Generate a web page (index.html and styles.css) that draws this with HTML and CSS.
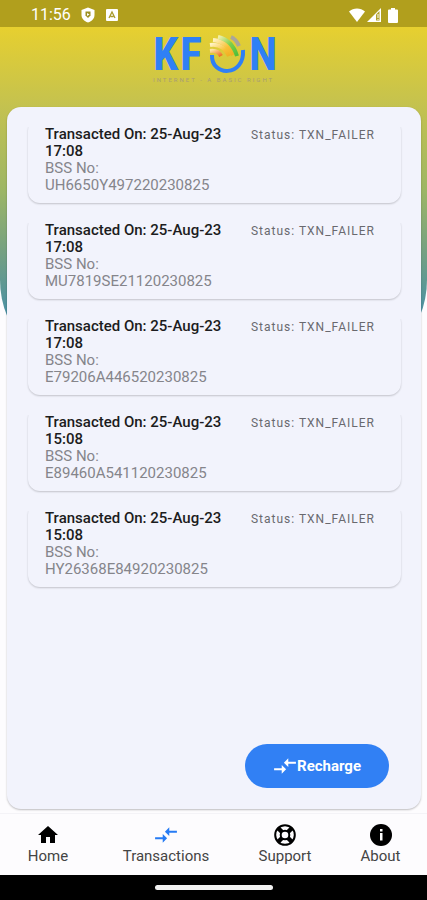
FILE: index.html
```html
<!DOCTYPE html>
<html lang="en">
<head>
<meta charset="utf-8">
<meta name="viewport" content="width=device-width, initial-scale=1">
<title>KFON Transactions</title>
<link rel="stylesheet" href="styles.css">
</head>
<body>
<svg class="defs" aria-hidden="true">
  <symbol id="swap" viewBox="1 1 22 22"><path fill="currentColor" d="M9 14H2v2h7v3l4-4-4-4zM15 13v-3h7V8h-7V5l-4 4z"/></symbol>
</svg>
<div class="screen">
  <div class="backdrop"></div>
  <div class="statusbar">
    <span class="clock">11:56</span>
    <svg width="14" height="16" viewBox="0 0 14 16"><path fill="#fff" d="M7 0.500 13.500 3v5c0 3.500-2.500 6-6.500 7.500C3 14 .5 11.500.5 8V3z"/><path fill="#9d9023" d="M4.500 4.500h5v4L7 11 4.500 8.500z"/><path fill="#fff" d="m6 6 2.500 1.500L6 9z"/></svg>
    <svg class="app" width="12" height="12" viewBox="0 0 12 12"><rect width="12" height="12" rx="1" fill="#fff"/><path d="M3 9 6 3l3 6M4.500 7.500h3" fill="none" stroke="#a99b2d" stroke-width="1.300"/></svg>
    <span class="signals">
      <svg width="16" height="14" viewBox="0 0 16 14"><path fill="#fff" d="M0 3.500C4.500-.5 11.500-.5 16 3.500L8 14z"/></svg>
      <svg width="14" height="14" viewBox="0 0 14 14"><path fill="#fff" d="M14 0v14H0z"/><path fill="#b1a02b" d="M9 6.500 12.500 3v9.500H9z"/><path fill="#fff" d="M10.500 6h1v4h-1zm0 5h1v1h-1z"/></svg>
      <svg class="battery" width="10" height="15" viewBox="0 0 10 15"><path fill="#fff" d="M3 0h4v1.500h2a1 1 0 0 1 1 1V14a1 1 0 0 1-1 1H1a1 1 0 0 1-1-1V2.500a1 1 0 0 1 1-1h2z"/></svg>
    </span>
  </div>
  <header class="brand">
    <svg width="126" height="54" viewBox="0 0 126 54" role="img" aria-label="KFON, Internet - a basic right">
      <defs>
        <linearGradient id="leafA" x1="0" y1="0" x2="1" y2="1"><stop offset="0" stop-color="#f5f0b0"/><stop offset=".5" stop-color="#7ed04b"/><stop offset="1" stop-color="#4dbd39"/></linearGradient>
        <linearGradient id="leafB" x1="0" y1="0" x2="1" y2="1"><stop offset="0" stop-color="#fff3c4"/><stop offset=".6" stop-color="#f8c136"/><stop offset="1" stop-color="#f1ad22"/></linearGradient>
        <linearGradient id="leafC" x1="0" y1="0" x2="1" y2="1"><stop offset="0" stop-color="#fce2a0"/><stop offset="1" stop-color="#f06a20"/></linearGradient>
      </defs>
      <text class="letters" x="2" y="39">K</text>
      <text class="letters" x="29" y="39">F</text>
      <text class="letters" x="98" y="39">N</text>
      <path d="M61 24C60 46 94 46 92 19" fill="none" stroke="#2f80f5" stroke-width="4"/>
      <g fill="none">
        <path d="M59 20q8-1 11 5" stroke="url(#leafC)" stroke-width="4"/>
        <path d="M59 14q13-2 19 11" stroke="url(#leafB)" stroke-width="4"/>
        <path d="M62 9q13 1 20 15" stroke="url(#leafB)" stroke-width="4"/>
        <path d="M67 6q14 3 19 19" stroke="url(#leafA)" stroke-width="4"/>
        <path d="M80 6q5 2 8 9" stroke="#aaa69a" stroke-width="4"/>
      </g>
      <text class="tagline" x="2" y="51">INTERNET - A BASIC RIGHT</text>
    </svg>
  </header>
  <main class="panel">
    <ul class="list">
      <li class="card"><div class="detail"><h2>Transacted On: 25-Aug-23 17:08</h2><p>BSS No: UH6650Y497220230825</p></div><span class="status">Status: TXN_FAILER</span></li>
      <li class="card"><div class="detail"><h2>Transacted On: 25-Aug-23 17:08</h2><p>BSS No: MU7819SE21120230825</p></div><span class="status">Status: TXN_FAILER</span></li>
      <li class="card"><div class="detail"><h2>Transacted On: 25-Aug-23 17:08</h2><p>BSS No: E79206A446520230825</p></div><span class="status">Status: TXN_FAILER</span></li>
      <li class="card"><div class="detail"><h2>Transacted On: 25-Aug-23 15:08</h2><p>BSS No: E89460A541120230825</p></div><span class="status">Status: TXN_FAILER</span></li>
      <li class="card"><div class="detail"><h2>Transacted On: 25-Aug-23 15:08</h2><p>BSS No: HY26368E84920230825</p></div><span class="status">Status: TXN_FAILER</span></li>
    </ul>
    <button class="recharge" type="button"><svg width="24" height="24"><use href="#swap"/></svg>Recharge</button>
  </main>
  <nav class="tabs">
    <a class="tab home" href="#home"><svg width="24" height="24" viewBox="0 0 24 24"><path d="M10 20v-6h4v6h5v-8h3L12 3 2 12h3v8z"/></svg>Home</a>
    <a class="tab transactions" href="#transactions" aria-current="page"><svg width="24" height="24"><use href="#swap"/></svg>Transactions</a>
    <a class="tab support" href="#support"><svg width="24" height="24" viewBox="0 0 24 24"><circle cx="12" cy="12" r="9.800" fill="none" stroke="#000" stroke-width="2"/><circle cx="12" cy="12" r="4.300" fill="none" stroke="#000" stroke-width="2"/><path d="m5 5 4 4m6 6 4 4m0-14-4 4m-6 6-4 4" stroke="#000" stroke-width="4.500"/></svg>Support</a>
    <a class="tab about" href="#about"><svg width="24" height="24" viewBox="0 0 24 24"><circle cx="12" cy="12" r="11"/><path fill="#fff" d="M11 6h2.500v2.500H11zm0 4h2.500v7.500H11z"/></svg>About</a>
  </nav>
  <div class="gesture"><span></span></div>
</div>
</body>
</html>
```
FILE: styles.css
```css
* { box-sizing: border-box; }
body {
  margin: 0;
  font-family: Roboto, "Liberation Sans", sans-serif;
  background: #fdfcfe;
}
.defs { position: absolute; width: 0; height: 0; }
.screen {
  position: relative;
  isolation: isolate;
  display: flex;
  flex-direction: column;
  min-height: 100vh;
}
.backdrop {
  position: absolute;
  z-index: -1;
  inset: 0 0 auto;
  height: 375px;
  border-radius: 0 0 95px 95px;
  background: linear-gradient(#e8d02e 24px, #c4c24f 106px, #9db665 190px, #76a181 250px, #478fa7 320px);
}
.statusbar {
  display: flex;
  align-items: center;
  height: 27px;
  padding: 3px 29px 0 31px;
  color: #fff;
  background: #b19f1d;
}
.statusbar svg { display: block; }
.clock { width: 50px; font-size: 16px; line-height: 20px; }
.app { margin-left: 11px; }
.signals { display: flex; align-items: center; gap: 2px; margin-left: auto; }
.battery { margin-left: 5px; }
.brand {
  display: flex;
  justify-content: center;
  height: 80px;
  padding-top: 4px;
}
.letters {
  font: bold 46px "Roboto Condensed", Roboto, sans-serif;
  fill: #2f80f5;
}
.tagline { font-size: 6px; letter-spacing: 2px; fill: #a79d76; }
.panel {
  flex: 1;
  display: flex;
  flex-direction: column;
  margin: 0 6px 4px 7px;
  padding: 12px 20px 21px 21px;
  border-radius: 14px;
  background: #f2f3fc;
  box-shadow: 0 1px 2px rgba(0, 0, 0, .25);
}
.list {
  display: grid;
  gap: 12px;
  margin: 0;
  padding: 0;
  list-style: none;
}
.card {
  display: flex;
  justify-content: space-between;
  padding: 7px 26px 9px 17px;
  border-radius: 12px;
  background: #f2f3fc;
  box-shadow: 0 1px 2px rgba(0, 0, 0, .2);
  clip-path: inset(8px -3px -4px);
}
.detail { width: 190px; }
.card h2, .card p {
  margin: 0;
  font-size: 15px;
  line-height: 17px;
}
.card h2 { font-weight: 500; color: #1c1c20; }
.card p { width: 175px; color: #85858b; }
.status {
  font-size: 12px;
  line-height: 19px;
  letter-spacing: 1px;
  white-space: nowrap;
  color: #69696f;
}
.recharge {
  display: flex;
  align-items: center;
  align-self: flex-end;
  height: 44px;
  margin: auto 12px 0 0;
  padding: 0 28px;
  border: 0;
  border-radius: 22px;
  font: 700 15px Roboto, "Liberation Sans", sans-serif;
  color: #fff;
  background: #3180f4;
}
.tabs {
  display: flex;
  height: 62px;
  padding-top: 9px;
  border-top: 1px solid #f4f3f7;
  background: #fdfcfe;
}
.tab {
  display: flex;
  flex-direction: column;
  align-items: center;
  font-size: 15px;
  line-height: 18px;
  color: #444;
  text-decoration: none;
}
.tab svg { display: block; fill: #000; }
.home { flex: 96 0 0; }
.transactions { flex: 140 0 0; }
.transactions svg { color: #267bf4; }
.support { flex: 98 0 0; }
.about { flex: 93 0 0; }
.gesture {
  display: flex;
  align-items: center;
  justify-content: center;
  height: 25px;
  background: #000;
}
.gesture span {
  width: 118px;
  height: 5px;
  border-radius: 3px;
  background: #f1f1f1;
}
```
